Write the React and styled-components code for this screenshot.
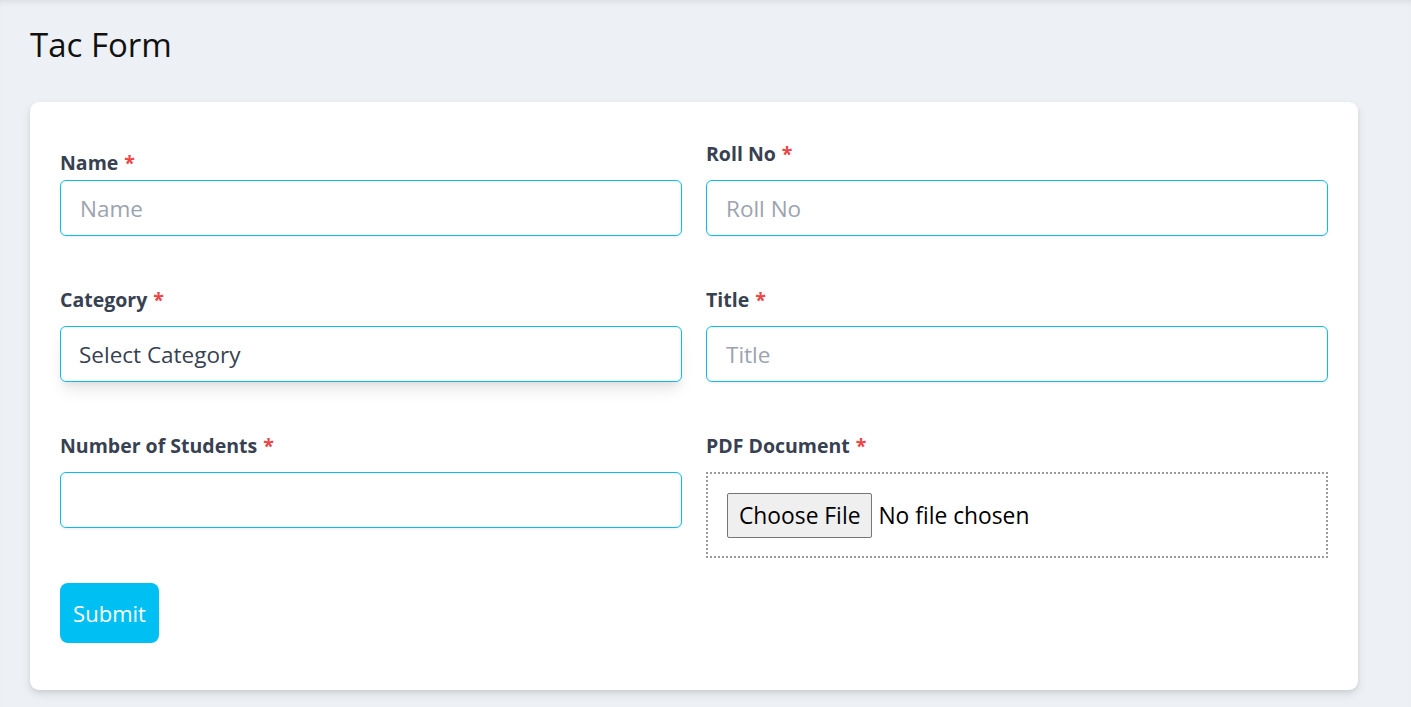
import React from 'react';
import styled, { createGlobalStyle } from 'styled-components';

const GlobalStyle = createGlobalStyle`
  html, body {
    margin: 0;
    padding: 0;
    background: #edf0f5;
    font-family: "Open Sans", "Noto Sans", sans-serif;
  }
  * { box-sizing: border-box; }
`

const Page = styled.div`
  min-height: 707px;
  padding: 22px 53px 20px 30px;
  box-shadow: inset 0 6px 8px -6px rgba(0, 0, 0, 0.12);
`

const Heading = styled.h1`
  margin: 0 0 34px 0;
  font-size: 33px;
  font-weight: 400;
  line-height: 46px;
  color: #111;
`

const Card = styled.form`
  background: #fff;
  border-radius: 9px;
  padding: 38px 30px 47px 30px;
  box-shadow: 0 4px 10px rgba(0, 0, 0, 0.1), 0 2px 4px rgba(0, 0, 0, 0.06);
`

const Grid = styled.div`
  display: grid;
  grid-template-columns: 1fr 1fr;
  column-gap: 24px;
  row-gap: 50px;
  align-items: start;
`

const Field = styled.div`
  display: flex;
  flex-direction: column;
`

const Label = styled.label`
  font-family: "Open Sans", sans-serif;
  font-weight: 700;
  font-size: 19.5px;
  line-height: 28px;
  color: #374151;
  margin-top: ${props => props.offset || '0px'};
  margin-bottom: ${props => props.offset ? '3px' : '12px'};
`

const Star = styled.span`
  color: #ef4444;
  margin-left: 6px;
`

const Input = styled.input`
  height: 56px;
  width: 100%;
  border: 1px solid #0bbdee;
  border-radius: 6px;
  padding: 0 19px;
  font-family: "Open Sans", sans-serif;
  font-size: 22.5px;
  color: #374151;
  outline: none;
  box-shadow: 0 1px 3px rgba(0, 0, 0, 0.08);
  &::placeholder {
    color: #9ca3af;
  }
`

const Select = styled.select`
  height: 56px;
  width: 100%;
  border: 1px solid #0bbdee;
  border-radius: 6px;
  padding: 0 18px;
  font-family: "Open Sans", sans-serif;
  font-size: 22.5px;
  color: #374151;
  background: #fff;
  appearance: none;
  outline: none;
  box-shadow: 0 10px 15px -3px rgba(0, 0, 0, 0.1), 0 4px 6px -2px rgba(0, 0, 0, 0.05);
`

const FileBox = styled.div`
  height: 86px;
  border: 2px dotted #9a9aa0;
  padding: 0 19px;
  display: flex;
  align-items: center;
`

const FileInput = styled.input`
  font-family: "Open Sans", sans-serif;
  font-size: 22.8px;
  color: #000;
  &::file-selector-button {
    font-family: "Open Sans", sans-serif;
    font-size: 22.8px;
    height: 45px;
    padding: 0 11px;
    margin-right: 6px;
    background: #efefef;
    border: 1px solid #767676;
    border-radius: 2px;
    color: #000;
  }
`

const SubmitButton = styled.button`
  margin-top: 25px;
  height: 60px;
  width: 99px;
  border: none;
  border-radius: 8px;
  background: #00bff2;
  color: #fff;
  font-family: "Open Sans", sans-serif;
  font-size: 22px;
  cursor: pointer;
`

class App extends React.Component {
  render() {
    return (
      <>
        <GlobalStyle />
        <Page>
          <Heading>Tac Form</Heading>
          <Card onSubmit={e => e.preventDefault()}>
            <Grid>
              <Field>
                <Label offset="9px">Name<Star>*</Star></Label>
                <Input placeholder="Name" />
              </Field>
              <Field>
                <Label>Roll No<Star>*</Star></Label>
                <Input placeholder="Roll No" />
              </Field>
              <Field>
                <Label>Category<Star>*</Star></Label>
                <Select defaultValue="">
                  <option value="">Select Category</option>
                </Select>
              </Field>
              <Field>
                <Label>Title<Star>*</Star></Label>
                <Input placeholder="Title" />
              </Field>
              <Field>
                <Label>Number of Students<Star>*</Star></Label>
                <Input type="number" />
              </Field>
              <Field>
                <Label>PDF Document<Star>*</Star></Label>
                <FileBox>
                  <FileInput type="file" accept="application/pdf" />
                </FileBox>
              </Field>
            </Grid>
            <SubmitButton type="submit">Submit</SubmitButton>
          </Card>
        </Page>
      </>
    );
  }
}

export default App;
